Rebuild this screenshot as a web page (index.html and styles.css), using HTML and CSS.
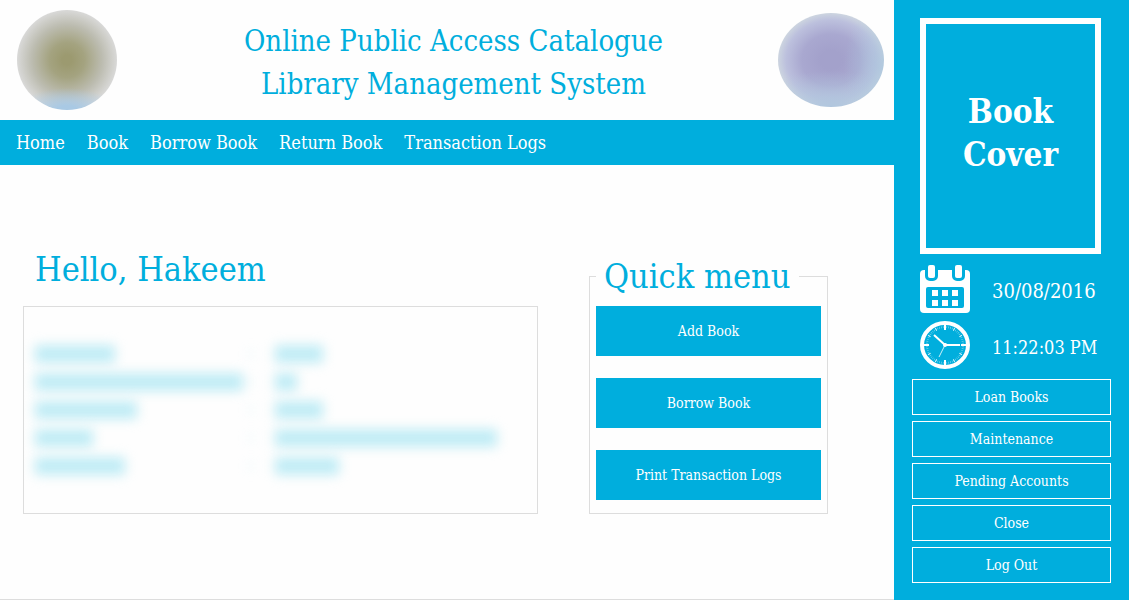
FILE: index.html
```html
<!DOCTYPE html>
<html lang="en">
<head>
<meta charset="utf-8">
<meta name="viewport" content="width=device-width, initial-scale=1">
<title>Library Management System</title>
<link rel="stylesheet" href="styles.css">
</head>
<body>
<div class="app">
  <div class="page">
    <header class="banner">
      <div class="seal seal-left"></div>
      <h1 class="title">Online Public Access Catalogue<br>Library Management System</h1>
      <div class="seal seal-right"></div>
    </header>
    <nav class="nav">
      <a href="#">Home</a>
      <a href="#">Book</a>
      <a href="#">Borrow Book</a>
      <a href="#">Return Book</a>
      <a href="#">Transaction Logs</a>
    </nav>
    <main class="content">
      <section class="account">
        <h2 class="greeting">Hello, Hakeem</h2>
        <div class="details">
          <div class="row"><span class="bar" style="width:80px"></span><span class="dot"></span><span class="bar" style="width:48px"></span></div>
          <div class="row"><span class="bar" style="width:208px"></span><span class="dot"></span><span class="bar" style="width:22px"></span></div>
          <div class="row"><span class="bar" style="width:102px"></span><span class="dot"></span><span class="bar" style="width:48px"></span></div>
          <div class="row"><span class="bar" style="width:58px"></span><span class="dot"></span><span class="bar" style="width:222px"></span></div>
          <div class="row"><span class="bar" style="width:90px"></span><span class="dot"></span><span class="bar" style="width:64px"></span></div>
        </div>
      </section>
      <fieldset class="quick">
        <legend>Quick menu</legend>
        <div class="quick-list">
          <button type="button">Add Book</button>
          <button type="button">Borrow Book</button>
          <button type="button">Print Transaction Logs</button>
        </div>
      </fieldset>
    </main>
  </div>
  <aside class="side">
    <div class="cover">Book<br>Cover</div>
    <div class="stamp stamp-date">
      <svg class="icon" viewBox="0 0 50 48" aria-hidden="true">
        <rect x="0" y="5" width="50" height="43" rx="4" fill="#fff"/>
        <path d="M5 4h13v7a5 5 0 0 1-5 5h-3a5 5 0 0 1-5-5zM32 4h13v7a5 5 0 0 1-5 5h-3a5 5 0 0 1-5-5z" fill="#00aedd"/>
        <rect x="8" y="0" width="7" height="13" rx="2" fill="#fff"/>
        <rect x="35" y="0" width="7" height="13" rx="2" fill="#fff"/>
        <rect x="6" y="22" width="38" height="21" rx="2" fill="#00aedd"/>
        <path d="M12 25h6v6h-6zM22 25h6v6h-6zM32 25h6v6h-6zM12 35h6v6h-6zM22 35h6v6h-6zM32 35h6v6h-6z" fill="#fff"/>
      </svg>
      <time>30/08/2016</time>
    </div>
    <div class="stamp">
      <svg class="icon" viewBox="0 0 50 48" aria-hidden="true">
        <g fill="none" stroke="#fff">
          <ellipse cx="25" cy="24" rx="23" ry="22" stroke-width="4"/>
          <circle cx="25" cy="24" r="18" pathLength="60" stroke-width="2" stroke-dasharray=".3 .7" stroke-dashoffset=".15" opacity=".5"/>
          <circle cx="25" cy="24" r="18" pathLength="12" stroke-width="3" stroke-dasharray=".1 .9" stroke-dashoffset=".05" opacity=".8"/>
          <path d="M25 4v5M25 39v5M4 24h5M41 24h5" stroke-width="2"/>
          <path d="M14 14L25 24H40" stroke-width="2"/>
          <path d="M26 22L19 36" opacity=".8"/>
        </g>
        <circle cx="25" cy="24" r="2" fill="#fff"/>
      </svg>
      <time>11:22:03 PM</time>
    </div>
    <div class="actions">
      <button type="button">Loan Books</button>
      <button type="button">Maintenance</button>
      <button type="button">Pending Accounts</button>
      <button type="button">Close</button>
      <button type="button">Log Out</button>
    </div>
  </aside>
</div>
</body>
</html>
```
FILE: styles.css
```css
* {
  box-sizing: border-box;
}

body {
  margin: 0;
  background: #fefefe;
  color: #00aedd;
  font-family: "DejaVu Serif Condensed", "DejaVu Serif", serif;
}

button {
  font: inherit;
  font-size: 14px;
  color: #fff;
  background: #00aedd;
  border: 0;
  padding: 0;
}

.app {
  display: grid;
  grid-template-columns: minmax(0, 1fr) 235px;
  min-height: 100vh;
}

.page {
  display: flex;
  flex-direction: column;
  border-bottom: 1px solid #ddd;
}

.banner {
  display: flex;
  align-items: center;
  justify-content: space-between;
  height: 120px;
  padding: 0 10px 0 17px;
}

.title {
  margin: 0;
  padding: 6px 0 0 12px;
  font-size: 29px;
  font-weight: 400;
  line-height: 43px;
  text-align: center;
}

.seal {
  border-radius: 50%;
}

.seal-left {
  width: 100px;
  height: 100px;
  background:
    radial-gradient(ellipse 50px 22px at 50% 100%, #a9c9e4 20%, transparent),
    radial-gradient(circle closest-side, #9c9a70 10%, #a4a380 35%, #bcbcb0 70%, #d9d9d8 100%);
}

.seal-right {
  width: 106px;
  height: 94px;
  background:
    radial-gradient(ellipse 40px 70px at 100% 60%, #a9c6dec0, transparent),
    radial-gradient(ellipse 90px 36px at 50% 100%, #b0c6de, transparent),
    radial-gradient(closest-side, #a3a1cb 20%, #a9a8d0 55%, #bcc0dd 85%, #cdd5e0 100%);
}

.nav {
  display: flex;
  align-items: center;
  gap: 22px;
  height: 45px;
  padding: 0 16px;
  background: #00aedd;
}

.nav a {
  color: #fff;
  font-size: 18px;
  text-decoration: none;
}

.content {
  display: grid;
  grid-template-columns: minmax(0, 515fr) minmax(0, 239fr);
  align-items: end;
  gap: 51px;
  padding: 82px 66px 24px 23px;
}

.greeting {
  margin: 0 0 15px;
  padding-left: 12px;
  font-size: 34px;
  font-weight: 400;
  line-height: 44px;
}

.details {
  display: grid;
  align-content: center;
  gap: 10px;
  height: 208px;
  padding: 0 11px;
  border: 1px solid #ddd;
}

.row {
  display: grid;
  grid-template-columns: 214px 26px 1fr;
  align-items: center;
  filter: blur(6px);
}

.bar {
  height: 18px;
  background: #c0ecf5;
}

.dot {
  width: 4px;
  height: 6px;
  background: #e4f7fb;
}

.quick {
  min-width: 0;
  margin: 0;
  padding: 8px 6px 13px;
  border: 1px solid #ddd;
}

.quick legend {
  padding: 0 9px 0 8px;
  font-size: 34px;
  line-height: 44px;
}

.quick-list {
  display: grid;
  gap: 22px;
}

.quick-list button {
  height: 50px;
}

.side {
  display: flex;
  flex-direction: column;
  padding: 18px 18px 16px;
  background: #00aedd;
  color: #fff;
}

.cover {
  display: grid;
  place-content: center;
  height: 236px;
  margin: 0 10px 11px 8px;
  padding-bottom: 6px;
  border: 6px solid #fff;
  font-size: 33px;
  font-weight: 700;
  line-height: 43px;
  text-align: center;
}

.stamp {
  display: flex;
  align-items: center;
  gap: 22px;
  height: 48px;
  margin: 0 8px 8px;
  font-size: 18px;
  white-space: nowrap;
}

.stamp-date {
  font-size: 20px;
}

.stamp time {
  padding-top: 4px;
}

.icon {
  flex: none;
  width: 50px;
  height: 48px;
}

.actions {
  display: grid;
  gap: 6px;
  margin-top: 2px;
}

.actions button {
  height: 36px;
  border: 1px solid #fff;
}
```
